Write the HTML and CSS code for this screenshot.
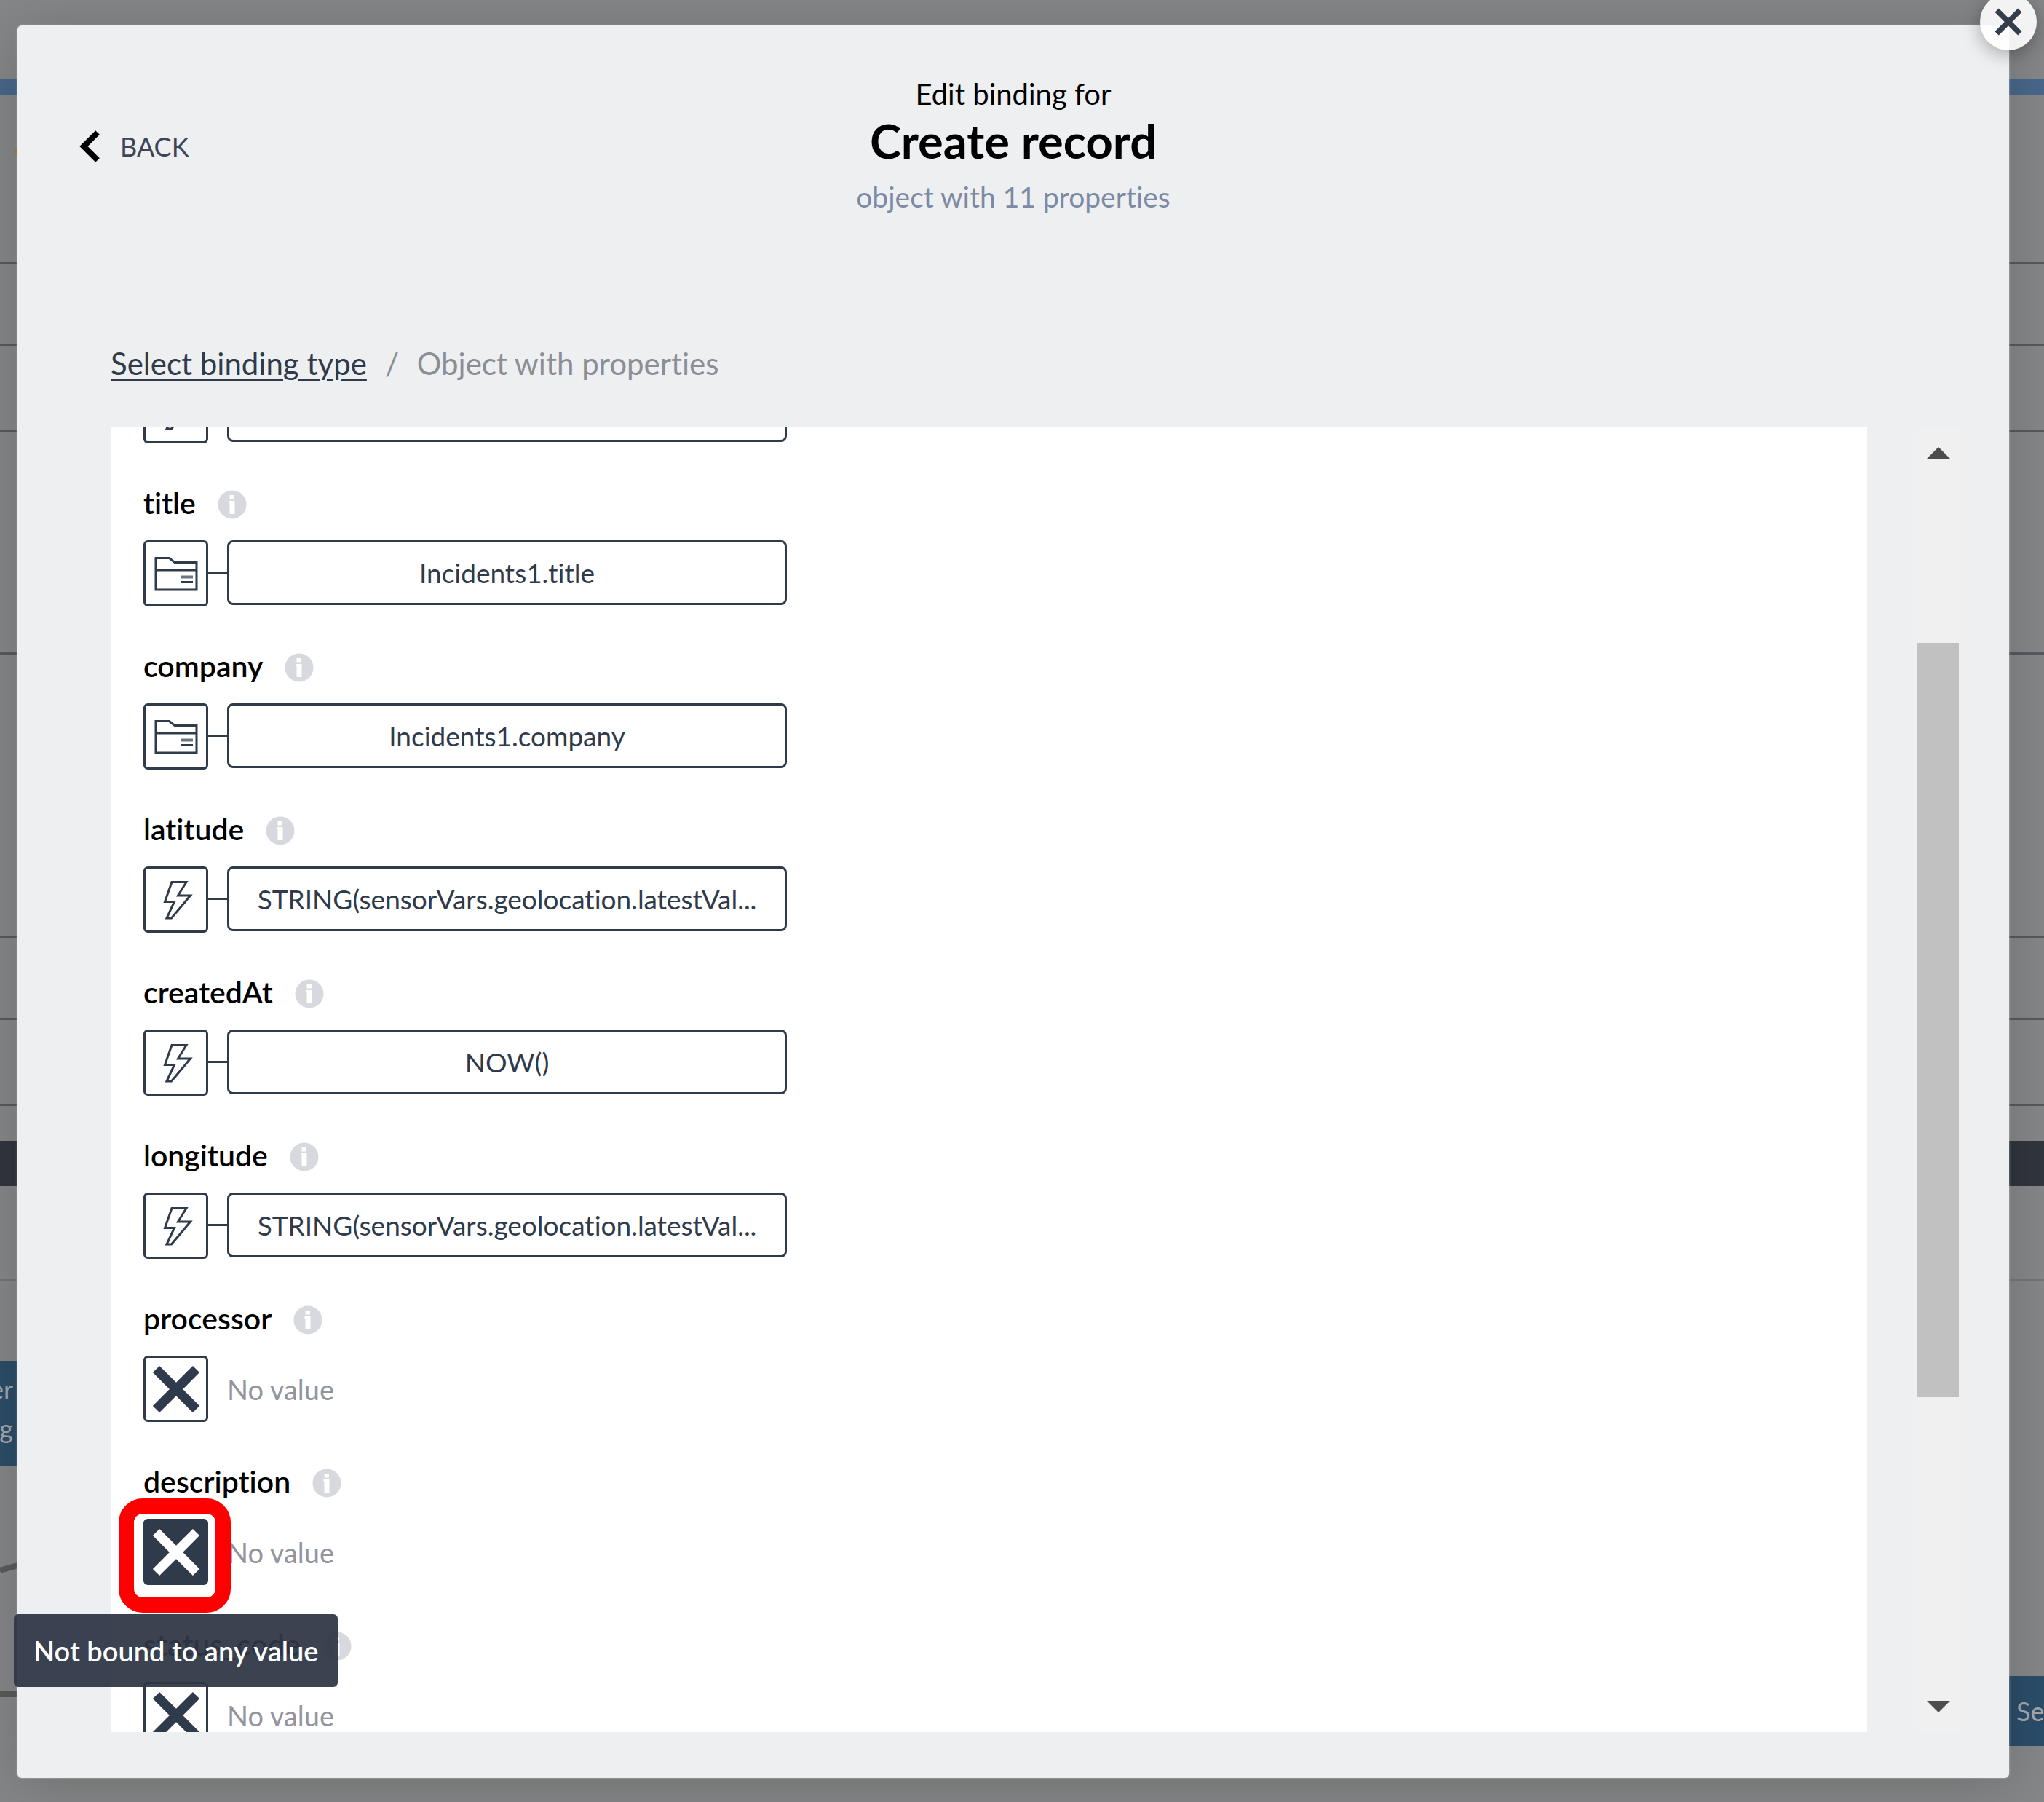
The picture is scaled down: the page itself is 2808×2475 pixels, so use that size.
FILE: index.html
```html
<!DOCTYPE html>
<html lang="en">
<head>
<meta charset="utf-8">
<title>Edit binding</title>
<link rel="stylesheet" href="styles.css">
</head>
<body>
<svg class="sprite" aria-hidden="true">
  <symbol id="folder" viewBox="0 0 60 60" fill="none" stroke="currentColor" stroke-width="3">
    <path d="M2 52V8.500H20.500L28 14.500H58V52ZM2 25H58"/>
    <path d="M36 34.500H53" stroke-width="4" opacity=".7"/>
    <path d="M36 41.500H53"/>
  </symbol>
  <symbol id="bolt" viewBox="0 0 60 60" fill="none" stroke="currentColor" stroke-width="3">
    <path d="M24 5.500H44L32.500 24H49.500L23.500 55H17L27.500 32.500H14.500Z"/>
  </symbol>
  <symbol id="cross" viewBox="0 0 66 66" stroke="currentColor" stroke-width="13">
    <path d="M5.500 5.500L60.500 60.500M60.500 5.500L5.500 60.500"/>
  </symbol>
  <symbol id="info" viewBox="0 0 40 40">
    <circle cx="20" cy="20" r="19.500" fill="#d7d9de"/>
    <path d="M16.500 7H23V12.500H16.500ZM15.500 15H23.500V33H16.500V18H15.500Z" fill="#fff"/>
  </symbol>
</svg>

<div class="backdrop" aria-hidden="true">
  <div class="bg-top"></div>
  <div class="bg-accent"></div>
  <div class="bg-row bg-row-a"><span class="bg-dot"></span></div>
  <div class="bg-row bg-row-b"></div>
  <div class="bg-row bg-row-c"></div>
  <div class="bg-row bg-row-d"></div>
  <div class="bg-row bg-row-e"></div>
  <div class="bg-row bg-row-b"></div>
  <div class="bg-row bg-row-c"></div>
  <div class="bg-gap"></div>
  <div class="bg-band"></div>
  <div class="bg-sub"></div>
  <div class="bg-canvas">
    <div class="node node-left"><span>er</span><span>g</span></div>
    <svg class="wires" viewBox="0 0 24 200"><path d="M0 16L24 9M0 186H24" stroke="#5a5a5b" stroke-width="8"/></svg>
    <div class="node node-right">Se</div>
  </div>
</div>

<main class="stage">
  <section class="modal" role="dialog" aria-labelledby="dialog-title">
    <button class="close" type="button" aria-label="Close"><svg viewBox="0 0 66 66"><use href="#cross"/></svg></button>
    <header class="head">
      <button class="back" type="button">
        <svg viewBox="0 0 28 46"><path d="M25 4L6 23L25 42" fill="none" stroke="#000" stroke-width="8"/></svg>
        <span>BACK</span>
      </button>
      <div class="heading">
        <p class="kicker">Edit binding for</p>
        <h1 id="dialog-title">Create record</h1>
        <p class="summary">object with 11 properties</p>
      </div>
    </header>
    <nav class="crumbs" aria-label="Breadcrumb">
      <a href="#types">Select binding type</a><span>/</span><span>Object with properties</span>
    </nav>
    <div class="body">
      <div class="panel">
        <div class="list">
          <div class="prop">
            <div class="label"></div>
            <div class="bind"><button class="kind" type="button" aria-label="Formula"><svg><use href="#bolt"/></svg></button><button class="value" type="button" aria-label="Bound value"></button></div>
          </div>
          <div class="prop">
            <div class="label"><span>title</span><svg><use href="#info"/></svg></div>
            <div class="bind"><button class="kind" type="button" aria-label="Data item"><svg><use href="#folder"/></svg></button><button class="value" type="button">Incidents1.title</button></div>
          </div>
          <div class="prop">
            <div class="label"><span>company</span><svg><use href="#info"/></svg></div>
            <div class="bind"><button class="kind" type="button" aria-label="Data item"><svg><use href="#folder"/></svg></button><button class="value" type="button">Incidents1.company</button></div>
          </div>
          <div class="prop">
            <div class="label"><span>latitude</span><svg><use href="#info"/></svg></div>
            <div class="bind"><button class="kind" type="button" aria-label="Formula"><svg><use href="#bolt"/></svg></button><button class="value" type="button">STRING(sensorVars.geolocation.latestVal...</button></div>
          </div>
          <div class="prop">
            <div class="label"><span>createdAt</span><svg><use href="#info"/></svg></div>
            <div class="bind"><button class="kind" type="button" aria-label="Formula"><svg><use href="#bolt"/></svg></button><button class="value" type="button">NOW()</button></div>
          </div>
          <div class="prop">
            <div class="label"><span>longitude</span><svg><use href="#info"/></svg></div>
            <div class="bind"><button class="kind" type="button" aria-label="Formula"><svg><use href="#bolt"/></svg></button><button class="value" type="button">STRING(sensorVars.geolocation.latestVal...</button></div>
          </div>
          <div class="prop">
            <div class="label"><span>processor</span><svg><use href="#info"/></svg></div>
            <div class="bind empty"><button class="kind" type="button" aria-label="No value"><svg><use href="#cross"/></svg></button><span>No value</span></div>
          </div>
          <div class="prop">
            <div class="label"><span>description</span><svg><use href="#info"/></svg></div>
            <div class="bind empty"><button class="kind active" type="button" aria-label="No value" aria-describedby="tip"><svg><use href="#cross"/></svg></button><span>No value</span></div>
          </div>
          <div class="prop">
            <div class="label"><span>status_code</span><svg><use href="#info"/></svg></div>
            <div class="bind empty"><button class="kind" type="button" aria-label="No value"><svg><use href="#cross"/></svg></button><span>No value</span></div>
          </div>
        </div>
      </div>
      <div class="scrollbar" aria-hidden="true">
        <span class="arrow up"></span>
        <span class="thumb"></span>
        <span class="arrow down"></span>
      </div>
    </div>
    <div class="tooltip" id="tip" role="tooltip">Not bound to any value</div>
  </section>
</main>
</body>
</html>
```
FILE: styles.css
```css
:root {
  --ink: #2f3a4b;
  --muted: #92959e;
  --surface: #eeeff1;
}

* { box-sizing: border-box; }

body {
  margin: 0;
  background: #858687;
  color: #000;
  font: 40px/48px Lato, "Open Sans", sans-serif;
  font-variant-ligatures: no-common-ligatures;
}

button {
  padding: 0;
  border: 0;
  background: none;
  color: inherit;
  font: inherit;
  font-variant-ligatures: inherit;
}

h1, p { margin: 0; }
svg { display: block; }
.sprite { position: absolute; width: 0; height: 0; }

/* Dimmed editor behind the dialog */
.backdrop {
  position: absolute;
  inset: 0;
  display: flex;
  flex-direction: column;
  overflow: hidden;
}
.bg-top { height: 109px; }
.bg-accent { height: 21px; background: #48678a; }
.bg-row { border-bottom: 3px solid #58595f; }
.bg-row-a { height: 233px; padding-top: 70px; }
.bg-row-b { height: 112px; }
.bg-row-c { height: 118px; }
.bg-row-d { height: 306px; }
.bg-row-e { height: 390px; }
.bg-dot { display: block; width: 16px; height: 16px; margin-left: 21px; border-radius: 8px; background: #a0742f; }
.bg-gap { height: 48px; }
.bg-band { height: 62px; background: #31353e; }
.bg-sub { height: 130px; border-bottom: 2px solid #757677; }
.bg-canvas { position: relative; flex: 1; }
.node { position: absolute; background: #2b4d69; color: #a3a7ab; font-size: 36px; }
.node-left {
  left: 0;
  top: 110px;
  display: flex;
  flex-direction: column;
  align-items: flex-end;
  width: 24px;
  height: 144px;
  padding: 12px 6px 0 0;
  line-height: 54px;
}
.node-right { right: 0; top: 543px; width: 60px; padding: 24px 0 24px 22px; overflow: hidden; }
.wires { position: absolute; left: 0; top: 382px; width: 24px; height: 200px; }

/* Dialog */
.stage {
  display: flex;
  height: 100vh;
  padding: 35px 48px 33px 24px;
}
.modal {
  position: relative;
  display: flex;
  flex: 1;
  flex-direction: column;
  padding: 68px 65px 63px 128px;
  border-radius: 6px;
  background: var(--surface);
  box-shadow: 0 0 3px rgba(255, 255, 255, .5), 0 8px 70px rgba(0, 0, 0, .18);
}
.close {
  position: absolute;
  top: -44px;
  right: -38px;
  display: grid;
  place-items: center;
  width: 78px;
  height: 78px;
  border-radius: 50%;
  background: rgba(255, 255, 255, .9);
  color: #353c4e;
  box-shadow: 0 6px 24px rgba(0, 0, 0, .3);
}
.close svg { width: 38px; height: 38px; }

.head {
  display: grid;
  grid-template-columns: 1fr auto 1fr;
  align-items: start;
  margin-left: -63px;
}
.back {
  display: flex;
  align-items: center;
  justify-self: start;
  gap: 28px;
  margin: 74px 0 0 20px;
  color: #3c4657;
  font-size: 36px;
}
.back svg { width: 28px; height: 46px; }
.heading { text-align: center; }
.kicker { line-height: 52px; }
h1 { font-size: 65px; font-weight: 700; line-height: 76px; }
.summary { color: #7c8aa5; font-size: 39px; line-height: 78px; }

.crumbs {
  display: flex;
  gap: 25px;
  margin-top: 162px;
  color: #8b8e95;
  font-size: 42px;
  line-height: 56px;
}
.crumbs a { color: var(--ink); text-decoration-thickness: 3px; text-underline-offset: 5px; }

.body {
  display: flex;
  flex: 1;
  justify-content: space-between;
  gap: 65px;
  min-height: 0;
  margin-top: 60px;
}
.panel { flex: 1; overflow: hidden; background: #fff; }

/* The list is scrolled part of the way through its first property */
.list { margin-top: -138px; padding: 0 45px; }
.prop { padding-bottom: 64px; }
.label {
  display: flex;
  align-items: center;
  gap: 30px;
  height: 40px;
  margin-bottom: 29px;
  font-size: 41px;
  font-weight: 600;
  line-height: 36px;
}
.label span { padding-bottom: 4px; }
.label svg { width: 40px; height: 40px; }
.bind { display: flex; color: var(--ink); font-size: 37px; }
.kind {
  position: relative;
  display: grid;
  place-items: center;
  width: 89px;
  height: 91px;
  border: 3px solid var(--ink);
  border-radius: 6px;
}
.kind svg { width: 60px; height: 60px; }
.value {
  position: relative;
  width: 769px;
  height: 89px;
  margin-left: 26px;
  border: 3px solid var(--ink);
  border-radius: 8px;
}
.value::before {
  content: "";
  position: absolute;
  top: 40px;
  left: -29px;
  width: 26px;
  height: 3px;
  background: var(--ink);
}
.empty { align-items: center; gap: 26px; color: var(--muted); font-size: 38px; }
.empty .kind { color: var(--ink); }
.empty .kind svg { width: 66px; height: 66px; }
.empty .active { background: var(--ink); color: #fff; }
.active::after {
  content: "";
  position: absolute;
  inset: -31px -34px -41px -37px;
  border: 21px solid #f00;
  border-radius: 33px;
}

.scrollbar {
  display: flex;
  flex-direction: column;
  align-items: center;
  width: 65px;
  padding: 27px 0;
  background: #f0f0f0;
}
.arrow { border: 16px solid transparent; }
.up { border-top: 0; border-bottom-color: #4d4d4d; }
.down { border-bottom: 0; border-top-color: #4d4d4d; }
.thumb { flex: 1; width: 57px; margin: 253px 0 417px; background: #c1c1c1; }

.tooltip {
  position: absolute;
  bottom: 125px;
  left: -5px;
  padding: 26px 27px;
  border-radius: 6px;
  background: rgba(47, 54, 69, .94);
  color: #fff;
  font-size: 38px;
  font-weight: 600;
}
```
